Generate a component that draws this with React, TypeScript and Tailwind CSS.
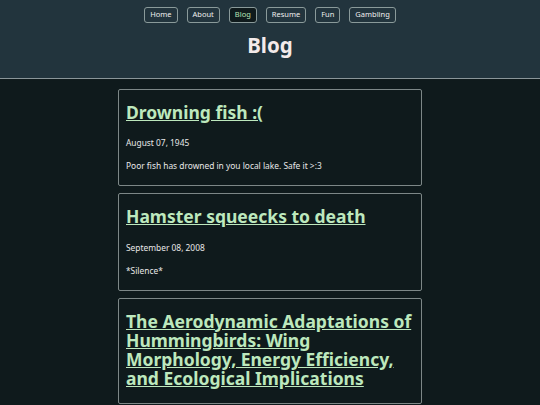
import React from "react";

const links = ["Home", "About", "Blog", "Resume", "Fun", "Gambling"];

const posts = [
  { title: "Drowning fish :(", date: "August 07, 1945", body: "Poor fish has drowned in you local lake. Safe it >:3" },
  { title: "Hamster squeecks to death", date: "September 08, 2008", body: "*Silence*" },
  {
    title: "The Aerodynamic Adaptations of Hummingbirds: Wing Morphology, Energy Efficiency, and Ecological Implications",
    date: "",
    body: "",
  },
];

export default function App() {
  return (
    <div className="min-h-[405px] bg-[#0f1a1c] text-[#e8e8e8]" style={{ fontFamily: '"Noto Sans", "Open Sans", sans-serif' }}>
      <header className="bg-[#22343d] border-b border-[#8a9599] h-[79px] flex flex-col items-center pt-[7px]">
        <nav className="flex gap-[9px]">
          {links.map((l) => (
            <a
              key={l}
              href="#"
              className={
                l === "Blog"
                  ? "h-[16px] px-[5px] flex items-center text-[7.5px] rounded-[3px] border border-[#8a9a9a] bg-[#0f1a1c] text-[#b7e4b7]"
                  : "h-[16px] px-[5px] flex items-center text-[7.5px] rounded-[3px] border border-[#8a9a9a] text-[#eeeeee]"
              }
            >
              {l}
            </a>
          ))}
        </nav>
        <h1 className="mt-[8px] text-[20.5px] font-bold leading-[28px] text-[#f3eaea]">Blog</h1>
      </header>
      <main className="flex flex-col items-center gap-[7px] pt-[10px]">
        {posts.map((p) => (
          <div key={p.title} className="w-[304px] border border-[#7d8787] rounded-[2px] px-[7px] pt-[13px] pb-[14px]">
            <a href="#" className="block text-[17.5px] font-bold leading-[19.3px] text-[#bde8bd] underline">
              {p.title}
            </a>
            {p.date && <p className="mt-[15px] text-[8.4px] leading-[11px]">{p.date}</p>}
            {p.body && <p className="mt-[12px] text-[8.4px] leading-[11px]">{p.body}</p>}
          </div>
        ))}
      </main>
    </div>
  );
}
